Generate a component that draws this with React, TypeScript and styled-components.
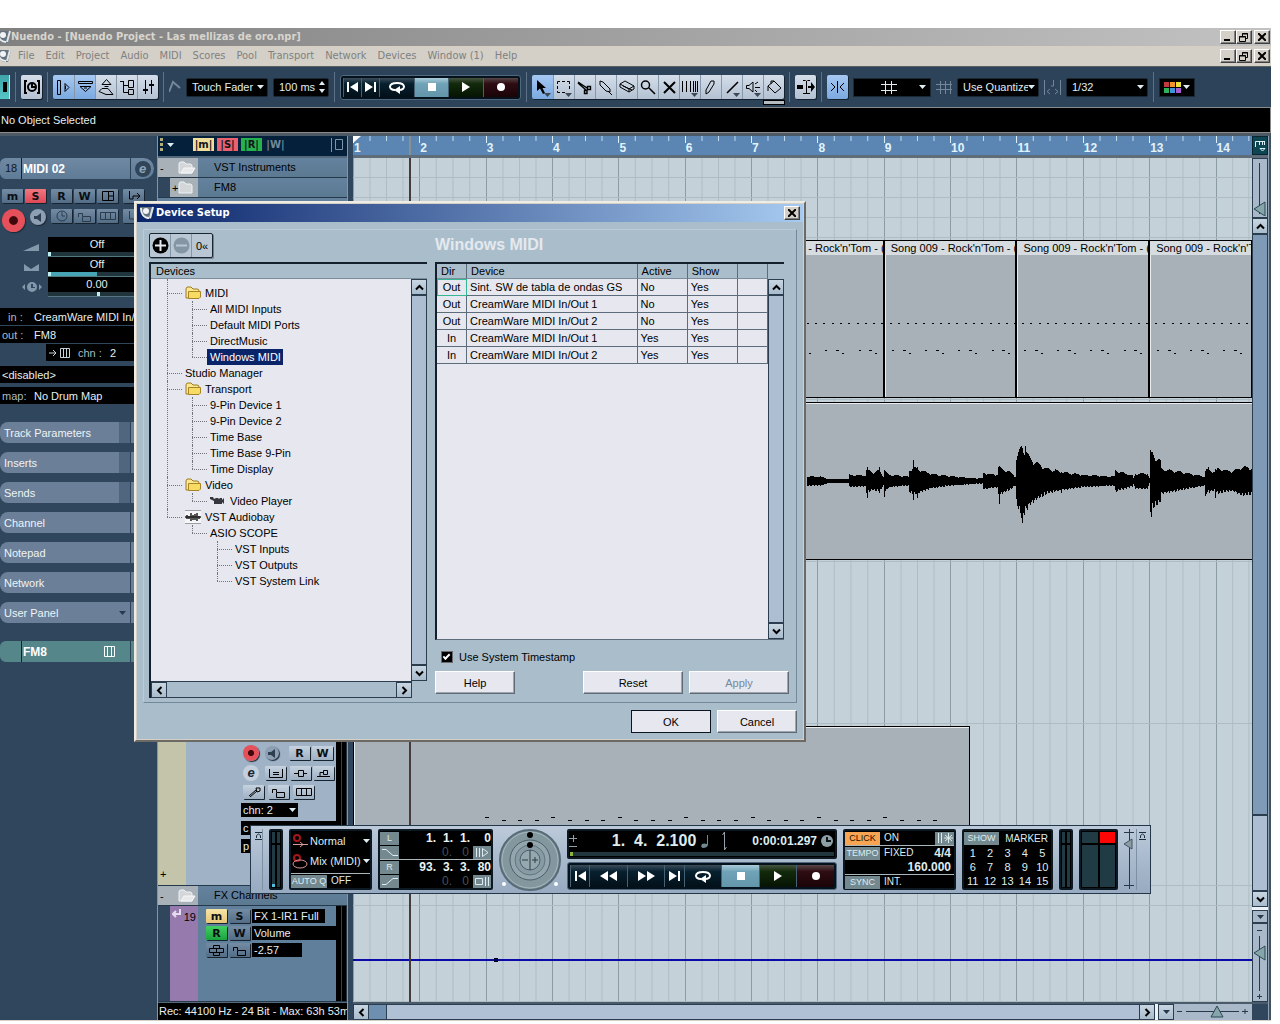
import React from "react";
import styled, { createGlobalStyle, css } from "styled-components";

const sans = '"Liberation Sans", Arial, sans-serif';
const tahoma = '"DejaVu Sans Condensed", "DejaVu Sans", Tahoma, sans-serif';
const BARS = 271;

const GlobalStyle = createGlobalStyle`
  *, *::before, *::after { box-sizing: border-box; }
  body { margin: 0; background: #fff; font: 11px/16px ${sans}; color: #000; overflow: hidden; }
  button, select, input { font: inherit; color: inherit; margin: 0; padding: 0; border: 0; border-radius: 0; }
  svg { display: block; flex: none; }
  ul { list-style: none; margin: 0; padding: 0; }
`;

/* ---------- glyphs ---------- */
type GlyphProps = { d: string; w?: number; h?: number; color?: string; fill?: string; sw?: number };
const Glyph = ({ d, w = 16, h = 16, color = "#000", fill = "none", sw = 1 }: GlyphProps) => (
  <svg width={w} height={h} viewBox={`0 0 ${w} ${h}`} fill={fill} stroke={color} strokeWidth={sw} aria-hidden="true">
    <path d={d} />
  </svg>
);
const Solid = ({ d, w = 16, h = 16, color = "#000" }: GlyphProps) => (
  <svg width={w} height={h} viewBox={`0 0 ${w} ${h}`} fill={color} aria-hidden="true">
    <path d={d} />
  </svg>
);
const Caret = ({ color = "#dfeef2" }: { color?: string }) => <Solid w={7} h={4} color={color} d="M0 0H7L3.5 4Z" />;

const Logo = () => (
  <svg width="14" height="14" viewBox="0 0 14 14" aria-hidden="true">
    <path d="M0 1H14L11 13H7C2 11 0 7 0 1Z" fill="#67727f" />
    <path d="M1 2C1 8 4 12 9 12" stroke="#e9edf2" strokeWidth="2" fill="none" />
    <circle cx="6" cy="5" r="3" fill="#f1f3f6" />
    <path d="M13 1L10 12" stroke="#dfe4e9" strokeWidth="2" fill="none" />
  </svg>
);
const Folder = ({ gold = false, open = false }: { gold?: boolean; open?: boolean }) => (
  <svg width={gold ? 16 : 18} height="14" viewBox={gold ? "0 0 16 14" : "0 0 18 14"} aria-hidden="true">
    <path
      d="M1 12V3Q1 1 3 1H6L8 3H12Q14 3 14 5V12Z"
      fill={gold ? "#fbe88e" : "#d3d7da"}
      stroke={gold ? "#9a7b22" : "#f1f3f4"}
    />
    {open ? <path d="M3 12L6 7H17L14 12Z" fill="#e7e9ea" stroke="#f6f7f8" /> : null}
    {gold ? <path d="M3.5 12.5V5.5H15.5V11L14 12.5Z" fill="#f7dc63" stroke="#a98426" /> : null}
  </svg>
);
const Clock = ({ color }: { color: string }) => (
  <svg width="12" height="12" viewBox="0 0 12 12" fill="none" stroke={color} aria-hidden="true">
    <circle cx="6" cy="6" r="5" />
    <path d="M6 2V6H9" />
  </svg>
);
const SolidClock = () => (
  <svg width="12" height="12" viewBox="0 0 12 12" fill="none" aria-hidden="true">
    <circle cx="6" cy="6" r="6" fill="#8fa0a6" />
    <path d="M6 2V6H10" stroke="#0b1418" strokeWidth="2" />
  </svg>
);
const P = {
  prev: "M0 0H2V10H0ZM11 0V10L3 5Z",
  next: "M0 0V10L8 5ZM9 0H11V10H9Z",
  play: "M0 0V10L8 5Z",
  rew: "M8 0V10L0 5ZM17 0V10L9 5Z",
  ffw: "M0 0V10L8 5ZM9 0V10L17 5Z",
  lock: "M1.500 6V2.500H5.500V5M5.500 5.500H13.500V10.500H5.500Z",
  keys: "M.5 1.500H15.500V8.500H.5ZM5.500 2V8M10.500 2V8",
};
const Cycle = () => (
  <svg width="18" height="13" viewBox="0 0 18 13" aria-hidden="true">
    <path d="M7 9C0 9 0 2 9 2S18 9 11 9" fill="none" stroke="#fff" strokeWidth="2" />
    <path d="M12 5V13L6 9Z" fill="#fff" />
  </svg>
);

/* ---------- frame ---------- */
const Page = styled.div`
  position: relative;
  min-height: 100vh;
  padding: 28px 9px 3px 0;
  display: flex;
  flex-direction: column;
`;
const Frame = styled.div`
  flex: 1;
  display: flex;
  flex-direction: column;
  border-bottom: 1px solid #d4d0c8;
`;
const TitleBar = styled.header`
  height: 18px;
  display: flex;
  align-items: center;
  background: linear-gradient(90deg, #808080, #c2c2c2);
  color: #d8d5ce;
  font: bold 11px/18px ${tahoma};
`;
const MenuBar = styled.nav`
  height: 20px;
  display: flex;
  align-items: center;
  background: #d4d0c8;
`;
const LogoSlot = styled.span`
  width: 11px;
  overflow: hidden;
  display: flex;
  justify-content: flex-end;
`;
const Menus = styled.div`
  display: flex;
  gap: 11px;
  padding-left: 7px;
  flex: 1;
`;
const MenuItem = styled.button`
  background: none;
  color: #808080;
  font: 11px/18px ${tahoma};
`;
const WinButtons = styled.div`
  display: flex;
  margin-left: auto;
  padding-right: 1px;
`;
const WinButton = styled.button`
  width: 16px;
  height: 14px;
  display: grid;
  place-items: center;
  background: #d4d0c8;
  border: 1px solid;
  border-color: #fff #404040 #404040 #fff;
  box-shadow: inset -1px -1px #808080;
  &:last-child:not(:first-child) { margin-left: 2px; }
`;
const WindowControls = () => (
  <WinButtons>
    <WinButton aria-label="Minimize"><Solid w={10} h={8} d="M1 6H7V8H1Z" /></WinButton>
    <WinButton aria-label="Restore"><Glyph w={10} h={9} d="M3.500 3V.5H8.500V5.500H6.500M.5 3.500H6.500V8.500H.5ZM3 1H9M0 4H7" /></WinButton>
    <WinButton aria-label="Close"><Glyph w={8} h={8} sw={2} d="M0 0L8 8M8 0L0 8" /></WinButton>
  </WinButtons>
);

/* ---------- toolbar ---------- */
const Toolbar = styled.div`
  height: 41px;
  display: flex;
  align-items: center;
  gap: 5px;
  background: #2d4359;
  border-top: 1px solid #5d6063;
`;
const Sep = styled.span`
  width: 1px;
  height: 30px;
  background: #5d7286;
`;
const TealTab = styled.button`
  width: 10px;
  height: 24px;
  background: linear-gradient(#3da3a9, #55c6c6);
  border-right: 1px solid #bfe4e6;
  display: grid;
  place-items: center;
`;
const ToolGroup = styled.div`
  display: flex;
  height: 24px;
  border-radius: 2px;
  overflow: hidden;
  box-shadow: 1px 1px #14222f;
`;
const ToolButton = styled.button<{ $on?: boolean }>`
  width: 21px;
  height: 24px;
  position: relative;
  display: grid;
  place-items: center;
  background: ${(p) => (p.$on ? "linear-gradient(#a6c8f2, #7ba9e0)" : "linear-gradient(#d5deea, #b3c1d2)")};
  &:not(:first-child) { border-left: 1px solid #8797aa; }
`;
const Corner = styled.span`
  position: absolute;
  right: 2px;
  bottom: 2px;
`;
const FillTool = styled.div`
  position: relative;
  display: flex;
`;
const FillSwatch = styled.span`
  position: absolute;
  right: -1px;
  top: 25px;
  width: 22px;
  height: 5px;
  background: #b4bcc2;
  border: 1px solid #000;
`;
const Well = styled.label<{ $w: number }>`
  width: ${(p) => p.$w}px;
  height: 19px;
  padding: 0 3px 0 5px;
  display: flex;
  align-items: center;
  background: #000;
  border: 1px solid #1a2836;
  border-radius: 2px;
  color: #e2eef2;
`;
const Select = styled.select`
  appearance: none;
  flex: 1;
  min-width: 0;
  background: transparent;
  outline: 0;
`;
const IconDrop = styled.button<{ $w: number }>`
  width: ${(p) => p.$w}px;
  height: 19px;
  padding: 0 4px;
  display: flex;
  align-items: center;
  justify-content: space-between;
  background: #000;
  border: 1px solid #1a2836;
`;
const Spread = styled.span`
  flex: 1;
  display: flex;
  justify-content: center;
`;
const Transport = styled.div<{ $grow?: boolean }>`
  display: flex;
  width: ${(p) => (p.$grow ? "auto" : "181px")};
  padding: 2px;
  height: ${(p) => (p.$grow ? 29 : 25)}px;
  background: #06121b;
  border: 1px solid #50687d;
  border-radius: 3px;
`;
type Tone = "navy" | "stop" | "play" | "rec";
const tones: Record<Tone, string> = {
  navy: "linear-gradient(#3b4c5a, #07202f 30%, #031019)",
  stop: "linear-gradient(#a9ccda, #71a3b8 30%, #6396ab)",
  play: "linear-gradient(#46543f, #122a0b 30%, #061303)",
  rec: "linear-gradient(#574548, #2e0c12 30%, #190408)",
};
const TButton = styled.button<{ $tone?: Tone; $small?: boolean }>`
  flex: ${(p) => (p.$small ? 1 : 2)};
  display: grid;
  place-items: center;
  background: ${(p) => tones[p.$tone || "navy"]};
  border-left: 1px solid #456172;
`;
const Swatches = styled.span`
  display: grid;
  grid-template-columns: repeat(3, 5px);
  gap: 1px;
`;
const Swatch = styled.i<{ $c: string }>`
  height: 5px;
  background: ${(p) => p.$c};
`;
const InfoLine = styled.div`
  height: 26px;
  padding: 0 1px;
  background: #000;
  border: solid #8a8a8a;
  border-width: 1px 1px 1px 0;
  color: #e6eef0;
  line-height: 24px;
`;

const views = [
  "M3.500 3.500H6.500V17.500H3.500ZM11 6.500L15 10.500L11 14.500ZM11.500 9V12",
  "M3.500 4.500H17.500V6.500H3.500ZM5 9.500H16L10.500 14.500ZM9 11H12",
  "M10.500 2.500L15 7.500H6ZM8.500 9.500H12.500M6 11.500L3 14.500L10 17.500L17 17.500L12 11.500Z",
  "M3 4.500H7M6.500 4V15.500H11M7 8.500H11M11.500 3.500H16.500V10.500H11.500ZM11.500 12.500H16.500V17.500H11.500Z",
  "M7.500 3V17M13.500 3V17M5 13.500H10M5 12.500H10M11 7.500H16M11 8.500H16",
];
const tools: { name: string; d: string; menu?: boolean; sw?: number; solid?: boolean }[] = [
  { name: "Object selection", d: "M4 3V14L7 11.500L10 17L12 16L9.500 11H13Z", menu: true, solid: true },
  { name: "Range selection", d: "M3.500 4.500H6M8 4.500H11M13 4.500H15.500V7M15.500 9V12M3.500 4.500V7M3.500 9V12M3.500 14V15.500H6M8 15.500H11", menu: true },
  { name: "Split", d: "M3 5L12 11M3 6L11 13M12.500 9.500H15.500V12.500H12.500ZM9.500 13.500H12V16.500H9.500Z", sw: 1.4 },
  { name: "Glue", d: "M4 4L7 5L14 12V15L10 14L4 8ZM12 14L16 18" },
  { name: "Erase", d: "M3 7L8 4L17 9L12 12ZM3 7V10L12 15V12M12 15L17 12V9M6 9L15 13" },
  { name: "Zoom", d: "M3.500 8A4 4 0 1 0 11.500 8A4 4 0 1 0 3.500 8M11 11L17 17", sw: 1.5 },
  { name: "Mute", d: "M5 5L16 16M16 5L5 16", sw: 2 },
  { name: "Time warp", d: "M2.500 4V15M6.500 4V15M10.500 4V15M13.500 4V15M15.500 4V15M17.500 4V15", menu: true },
  { name: "Draw", d: "M10 4L13 4L13 7L8 15L5 17L5 13Z" },
  { name: "Line", d: "M5 16L16 5", menu: true, sw: 1.6 },
  { name: "Play", d: "M3.500 8.500H6L10 5V15L6 11.500H3.500ZM12 7L15 5M12 10.500H17M12 13L14 15", menu: true },
  { name: "Color", d: "M4 9L10 4L17 11L11 16ZM4 9V14M7 7V4L10 4" },
];
const gridD = "M4.500 0V13M9.500 0V13M14.500 0V13M0 3.500H16M0 8.500H16";

const MainToolbar = () => (
  <Toolbar>
    <TealTab aria-label="Activate project"><Solid w={4} h={10} d="M0 0H4V10H0Z" /></TealTab>
    <Sep />
    <ToolGroup>
      <ToolButton aria-label="Delay compensation">
        <svg width="18" height="16" viewBox="0 0 18 16" fill="none" stroke="#000" strokeWidth="2" aria-hidden="true">
          <path d="M4 2H2V14H4M14 2H16V14H14M9 4V8H13" /><circle cx="9" cy="8" r="4" />
        </svg>
      </ToolButton>
    </ToolGroup>
    <Sep />
    <ToolGroup>
      {views.map((d, i) => (
        <ToolButton key={d} $on={i < 2} aria-label={"View " + (i + 1)}><Glyph w={20} h={20} d={d} /></ToolButton>
      ))}
    </ToolGroup>
    <Sep />
    <Glyph w={12} h={14} color="#74879a" sw={2} d="M0 12L4 2L11 8" />
    <Well $w={82}>
      <Select aria-label="Automation mode"><option>Touch Fader</option></Select><Caret />
    </Well>
    <Well $w={56}>
      <Select aria-label="Return time"><option>100 ms</option></Select>
      <Solid w={6} h={12} color="#dfeef2" d="M0 4H6L3 0ZM0 8H6L3 12Z" />
    </Well>
    <Sep />
    <Transport>
      <TButton $small aria-label="Previous"><Solid w={11} h={10} color="#fff" d={P.prev} /></TButton>
      <TButton $small aria-label="Next"><Solid w={11} h={10} color="#fff" d={P.next} /></TButton>
      <TButton aria-label="Cycle"><Cycle /></TButton>
      <TButton $tone="stop" aria-label="Stop"><Solid w={8} h={8} color="#fff" d="M0 0H8V8H0Z" /></TButton>
      <TButton $tone="play" aria-label="Play"><Solid w={8} h={10} color="#fff" d={P.play} /></TButton>
      <TButton $tone="rec" aria-label="Record"><Solid w={8} h={8} color="#fff" d="M0 4A4 4 0 1 1 8 4A4 4 0 1 1 0 4" /></TButton>
    </Transport>
    <Sep />
    <FillTool>
      <ToolGroup>
        {tools.map((t, i) => (
          <ToolButton key={t.name} $on={i === 0} aria-label={t.name}>
            {t.solid ? <Solid w={20} h={20} d={t.d} /> : <Glyph w={20} h={20} d={t.d} sw={t.sw} />}
            {t.menu ? <Corner><Caret color="#3c4854" /></Corner> : null}
          </ToolButton>
        ))}
      </ToolGroup>
      <FillSwatch />
    </FillTool>
    <Sep />
    <ToolGroup>
      <ToolButton aria-label="Autoscroll"><Solid w={20} h={18} d="M1 7H7V11H1ZM10 3H11V15H10ZM7 2H9L10.500 3L12 2H14V3H11V15H14V16H7V15H10V3H7ZM12 8H15V4L19 9L15 14V10H12Z" /></ToolButton>
    </ToolGroup>
    <Sep />
    <ToolGroup>
      <ToolButton $on aria-label="Snap"><Glyph w={15} h={14} d="M7.500 1V13M1 3L5 7L1 11M14 3L10 7L14 11" /></ToolButton>
    </ToolGroup>
    <IconDrop $w={78} aria-label="Snap mode">
      <Spread><Glyph w={16} h={13} color="#e2eef2" d="M4.500 0V13M10.500 0V13M0 3.500H16M0 9.500H16" /></Spread><Caret />
    </IconDrop>
    <Glyph w={16} h={13} color="#74879a" d={gridD} />
    <Well $w={82}>
      <Select aria-label="Grid type"><option>Use Quantize</option></Select><Caret />
    </Well>
    <Glyph w={17} h={16} color="#74879a" d="M.5 1V16M16.500 1V16M9.500 1V7H7M6 10L3 12.500L6 15M11 10L14 12.500L11 15" />
    <Well $w={82}>
      <Select aria-label="Quantize"><option>1/32</option></Select><Caret />
    </Well>
    <Sep />
    <IconDrop $w={36} aria-label="Colors">
      <Swatches>
        {["#c23a3a", "#f0932a", "#e9e03c", "#2fb257", "#3f93dd", "#a85bd0"].map((c) => <Swatch key={c} $c={c} />)}
      </Swatches>
      <Caret />
    </IconDrop>
  </Toolbar>
);

/* ---------- inspector ---------- */
const Main = styled.main`
  flex: 1;
  display: flex;
  background: #2f465c;
  border-top: 3px solid #4d5a66;
  border-right: 2px solid #43505e;
`;
const Inspector = styled.aside`
  width: 157px;
  padding-top: 22px;
  display: flex;
  flex-direction: column;
`;
const NameBar = styled.div<{ $teal?: boolean }>`
  height: 21px;
  width: 154px;
  display: flex;
  align-items: center;
  border-radius: 6px 11px 11px 6px;
  background: ${(p) => (p.$teal ? "#55868a" : "linear-gradient(#7089a3, #5f7b96)")};
  color: #fff;
  font-weight: bold;
`;
const NameNumber = styled.span`
  width: 22px;
  height: 21px;
  padding-left: 5px;
  border-right: 1px solid #14212e;
  font-weight: normal;
  color: #101820;
  line-height: 21px;
`;
const NameText = styled.span`
  flex: 1;
  padding-left: 1px;
  font-size: 12px;
`;
const NameEnd = styled.span`
  width: 24px;
  height: 21px;
  display: grid;
  place-items: center;
  border-left: 1px solid #2b4157;
`;
const Edit = styled.button<{ $light?: boolean }>`
  width: 16px;
  height: 16px;
  border-radius: 50%;
  background: ${(p) => (p.$light ? "#c3cfdc" : "#304558")};
  color: ${(p) => (p.$light ? "#182430" : "#8fa5ba")};
  font: italic bold 13px/14px ${sans};
`;
const Controls = styled.div<{ $top?: boolean }>`
  height: 26px;
  margin-top: ${(p) => (p.$top ? 4 : 0)}px;
  display: flex;
  align-items: ${(p) => (p.$top ? "center" : "flex-start")};
  padding-left: 2px;
  gap: 2px;
`;
const keyColors: Record<string, string> = {
  slate: "linear-gradient(#748ca3, #536d87)",
  red: "linear-gradient(#f07880, #de4857)",
  light: "linear-gradient(#c6d2df, #9eb0c3)",
  yellow: "linear-gradient(#f6e4a6, #e6c578)",
  green: "linear-gradient(#42cf62, #19a33e)",
};
const Key = styled.button<{ $c?: string }>`
  width: 21px;
  height: 14px;
  display: grid;
  place-items: center;
  background: ${(p) => keyColors[p.$c || "slate"]};
  border-radius: 1px;
  box-shadow: 1px 1px #17242f;
  color: #0a0f14;
  font: bold 11px/13px "DejaVu Sans", sans-serif;
`;
const Gap = styled.span<{ $w: number }>`
  width: ${(p) => p.$w}px;
`;
const Round = styled.button<{ $size: number; $red?: boolean }>`
  width: ${(p) => p.$size}px;
  height: ${(p) => p.$size}px;
  border-radius: 50%;
  display: grid;
  place-items: center;
  background: ${(p) => (p.$red ? "radial-gradient(circle, #40090c 0 24%, #e5505a 30%)" : "#8d9fb2")};
  box-shadow: 1px 1px 1px #1c2a38;
`;
const Speaker = () => <Solid w={9} h={9} color="#2c3e50" d="M0 3H3L7 0V9L3 6H0Z" />;
const Params = styled.div`
  padding: 2px 11px 11px 0;
`;
const Param = styled.div`
  height: 20px;
  display: grid;
  grid-template-columns: 48px 1fr;
  align-items: center;
`;
const ParamIcon = styled.span`
  padding-left: 22px;
`;
const ParamValue = styled.div`
  height: 20px;
  background: #000;
  border-bottom: 1px solid #54777f;
  color: #e6eef0;
  line-height: 15px;
  text-align: center;
`;
const ParamBar = styled.div<{ $at: number; $fill?: boolean }>`
  height: 4px;
  background: #20343b;
  &::before {
    content: "";
    display: block;
    width: ${(p) => (p.$fill ? p.$at : 3)}px;
    height: 4px;
    margin-left: ${(p) => (p.$fill ? 0 : p.$at)}px;
    background: ${(p) => (p.$fill ? "#46a4b4" : "#bdeef2")};
    border-left: 3px solid #bdeef2;
  }
`;
const Route = styled.div<{ $indent?: number; $gap?: number }>`
  height: 17px;
  margin: 0 4px ${(p) => p.$gap || 1}px ${(p) => p.$indent || 0}px;
  padding-left: 2px;
  display: flex;
  align-items: center;
  background: #000;
  color: #e6eef0;
  white-space: nowrap;
  overflow: hidden;
`;
const RouteLabel = styled.span`
  width: 32px;
  flex: none;
  color: #a9bcc4;
`;
const Sections = styled.div`
  padding-top: 17px;
  display: flex;
  flex-direction: column;
  gap: 9px;
`;
const Section = styled.button<{ $split?: boolean }>`
  height: 21px;
  width: 154px;
  padding: 0 28px 0 4px;
  display: flex;
  align-items: center;
  justify-content: space-between;
  border-radius: 8px 0 0 8px;
  color: #eef3f6;
  background: linear-gradient(90deg, #6b8098 119px, ${(p) => (p.$split ? "#50667e" : "#6b8098")} 119px 130px, #2b4157 130px 131px, #6b8098 131px);
`;

const InspectorPanel = () => (
  <Inspector>
    <NameBar>
      <NameNumber>18</NameNumber>
      <NameText>MIDI 02</NameText>
      <NameEnd><Edit aria-label="Edit channel">e</Edit></NameEnd>
    </NameBar>
    <Controls $top>
      <Key>m</Key><Key $c="red">S</Key><Gap $w={1} /><Key>R</Key><Key>W</Key>
      <Key aria-label="Panel"><Glyph w={12} h={10} d="M.5 .5H11.500V9.500H.5ZM6.500 .5V9.500M7 5H11" /></Key><Gap $w={1} />
      <Key aria-label="Input"><Glyph w={14} h={10} d="M2.500 0V8H6V5H12M10 2L13 5L10 8" /></Key>
    </Controls>
    <Controls>
      <Round $size={23} $red aria-label="Record enable" /><Gap $w={1} />
      <Round $size={16} aria-label="Monitor"><Speaker /></Round><Gap $w={1} />
      <Key aria-label="Timebase"><Clock color="#2a3b4c" /></Key>
      <Key aria-label="Lock"><Glyph w={15} h={11} color="#2a3b4c" d={P.lock} /></Key>
      <Key aria-label="Lanes"><Glyph w={16} h={10} color="#2a3b4c" d={P.keys} /></Key><Gap $w={1} />
      <Key aria-label="Output"><Glyph w={12} h={10} color="#2a3b4c" d="M1.500 0V8H11" /></Key>
    </Controls>
    <Params>
      <Param>
        <ParamIcon><Solid w={18} h={9} color="#8298ab" d="M1 8L17 1V8Z" /></ParamIcon>
        <ParamValue>Off<ParamBar $at={0} /></ParamValue>
      </Param>
      <Param>
        <ParamIcon><Solid w={18} h={9} color="#8298ab" d="M2 1L9 6L17 1V8H2Z" /></ParamIcon>
        <ParamValue>Off<ParamBar $at={49} $fill /></ParamValue>
      </Param>
      <Param>
        <ParamIcon><Solid w={20} h={10} color="#8298ab" d="M0 5L3 2V8ZM20 5L17 2V8ZM10 0A5 5 0 1 0 10 10A5 5 0 1 0 10 0M9 2H11V5H13V6H9Z" /></ParamIcon>
        <ParamValue>0.00<ParamBar $at={49} /></ParamValue>
      </Param>
    </Params>
    <Route><RouteLabel>&nbsp; in :</RouteLabel>CreamWare MIDI In/O</Route>
    <Route><RouteLabel>out :</RouteLabel>FM8</Route>
    <Route $indent={46} $gap={5}>
      <Glyph w={24} h={12} color="#c5d3d8" d="M1 6H8M5 3L8 6L5 9M12.500 1.500H21.500V10.500H12.500ZM15.500 1V10M18.500 1V10" />
      <Gap $w={6} /><RouteLabel>chn :</RouteLabel>2
    </Route>
    <Route $gap={4}>&lt;disabled&gt;</Route>
    <Route><RouteLabel>map:</RouteLabel>No Drum Map</Route>
    <Sections>
      {["Track Parameters", "Inserts", "Sends", "Channel", "Notepad", "Network", "User Panel"].map((s, i) => (
        <Section key={s} $split={i < 3}>{s}{s === "User Panel" ? <Caret color="#263a4e" /> : null}</Section>
      ))}
      <Gap $w={1} />
      <NameBar $teal>
        <NameNumber />
        <NameText>FM8</NameText>
        <Glyph w={11} h={11} color="#fff" d="M.5 .5H10.500V10.500H.5ZM3.500 0V10M7.500 0V10" />
        <Gap $w={15} /><NameEnd />
      </NameBar>
    </Sections>
  </Inspector>
);

/* ---------- track list ---------- */
const TrackColumn = styled.section`
  width: 191px;
  display: flex;
  flex-direction: column;
  border-left: 1px solid #8496a6;
  border-right: 1px solid #8496a6;
`;
const TrackHeader = styled.div`
  height: 22px;
  padding: 0 3px 3px 2px;
  display: flex;
  align-items: center;
  gap: 3px;
  background: #04203a;
  border-bottom: 2px solid #54687b;
`;
const Flag = styled.button<{ $c: string }>`
  width: 21px;
  height: 13px;
  background: ${(p) => p.$c};
  color: #10151a;
  font: bold 10px/12px "DejaVu Sans", sans-serif;
  &:disabled { color: #73879a; }
`;
const laneHeight = css<{ $h: number }>`
  ${(p) => (p.$h ? `height: ${p.$h}px; flex: none;` : "flex: 1;")}
`;
const Track = styled.div<{ $h: number }>`
  ${laneHeight}
  display: flex;
  background: linear-gradient(#64829e, #5c7992);
  border-bottom: 1px solid #26394b;
`;
const TrackTab = styled.div<{ $indent?: number }>`
  width: ${(p) => 40 - (p.$indent || 0)}px;
  margin-left: ${(p) => p.$indent || 0}px;
  padding: 0 2px;
  display: flex;
  justify-content: space-between;
  align-items: center;
  background: #a9b1b8;
  box-shadow: ${(p) => -(p.$indent || 0)}px 0 #2f465c;
  line-height: 26px;
`;
const TrackTitle = styled.span`
  padding-left: 16px;
  line-height: 19px;
`;
const Stripe = styled.div<{ $c: string; $indent?: number }>`
  width: 29px;
  padding: 3px 2px;
  display: flex;
  justify-content: space-between;
  align-items: ${(p) => (p.$indent ? "flex-start" : "flex-end")};
  background: ${(p) => p.$c};
  box-shadow: ${(p) => -(p.$indent || 0)}px 0 #2f465c;
  margin-left: ${(p) => p.$indent || 0}px;
`;
const TrackBody = styled.div<{ $c: string; $pad: string; $gap: number }>`
  flex: 1;
  padding: ${(p) => p.$pad};
  background: ${(p) => p.$c};
  display: flex;
  flex-direction: column;
  gap: ${(p) => p.$gap}px;
`;
const TrackRow = styled.div<{ $gap?: number }>`
  display: flex;
  align-items: center;
  padding-left: 2px;
  gap: ${(p) => p.$gap || 2}px;
`;
const Meter = styled.div`
  width: 11px;
  flex: none;
  background: #000;
  border-right: 1px solid #25313c;
  box-shadow: inset -4px 0 #000, inset -5px 0 #33424f;
`;
const ValueBox = styled.div<{ $w: number }>`
  width: ${(p) => p.$w}px;
  height: 14px;
  padding: 0 2px;
  display: flex;
  align-items: center;
  justify-content: space-between;
  background: #000;
  color: #e6eef0;
  white-space: nowrap;
`;
const Status = styled.footer`
  height: 18px;
  padding-left: 1px;
  background: #000;
  color: #e6eef0;
  border-top: 1px solid #55697c;
  white-space: nowrap;
  overflow: hidden;
`;

const TrackList = () => (
  <TrackColumn>
    <TrackHeader>
      <Solid w={4} h={14} color="#b5ad79" d="M0 0H3V3H0ZM0 5H3V8H0ZM0 10H3V13H0Z" />
      <Caret />
      <Gap $w={13} />
      <Flag $c="#f0df9a">|m|</Flag><Flag $c="#ea6170">|S|</Flag><Flag $c="#27b14e">|R|</Flag>
      <Flag $c="transparent" disabled>|W|</Flag>
      <Gap $w={39} />
      <Glyph w={12} h={14} color="#7f93a6" d="M.5 0V14M4.500 1.500H11.500V11.500H4.500Z" />
    </TrackHeader>
    <Track $h={20}><TrackTab>-<Folder open /></TrackTab><TrackTitle>VST Instruments</TrackTitle></Track>
    <Track $h={20}><TrackTab $indent={12}>+<Folder /></TrackTab><TrackTitle>FM8</TrackTitle></Track>
    <Track $h={20} /><Track $h={20} /><Track $h={162} /><Track $h={162} /><Track $h={162} />
    <Track $h={162}>
      <Stripe $c="#c3c4a9">+</Stripe>
      <TrackBody $c="#a0b3c6" $pad="21px 0 0 55px" $gap={4}>
        <TrackRow>
          <Round $size={16} $red aria-label="Record enable" /><Gap $w={2} />
          <Round $size={14} aria-label="Monitor"><Speaker /></Round><Gap $w={6} />
          <Key $c="light">R</Key><Key $c="light">W</Key>
        </TrackRow>
        <TrackRow>
          <Edit $light aria-label="Edit channel">e</Edit><Gap $w={2} />
          <Key $c="light" aria-label="Edit in place"><Glyph w={14} h={9} d="M.5 0V8.500H13.500V0M4 3.500H10M4 5.500H10" /></Key><Gap $w={0} />
          <Key $c="light" aria-label="Inserts"><Glyph w={14} h={9} d="M0 4.500H4M9 4.500H13M4.500 1.500H9.500V7.500H4.500Z" /></Key>
          <Key $c="light" aria-label="Sends"><Glyph w={14} h={9} d="M0 7.500H13M3 7V3.500H6M6.500 1.500H10.500V5.500H6.500Z" /></Key>
        </TrackRow>
        <TrackRow $gap={4}>
          <Key $c="light" aria-label="Drum map"><Glyph w={14} h={10} d="M2 9L9 3M3 10L10 4M9 1H13V4L10 5Z" /></Key>
          <Key $c="light" aria-label="Lock"><Glyph w={15} h={11} d={P.lock} /></Key>
          <Key $c="light" aria-label="Lanes"><Glyph w={16} h={10} d={P.keys} /></Key>
        </TrackRow>
        <ValueBox $w={57}><span>chn: 2</span><Caret /></ValueBox>
        <ValueBox $w={95}>c</ValueBox>
        <ValueBox $w={95}>p</ValueBox>
      </TrackBody>
      <Meter />
    </Track>
    <Track $h={20}><TrackTab>-<Folder open /></TrackTab><TrackTitle>FX Channels</TrackTitle></Track>
    <Track $h={0}>
      <Stripe $c="#9679ad" $indent={12}>
        <Glyph w={9} h={9} color="#e5dcee" sw={2} d="M8 0V5H2M4 2L1 5L4 8" />19
      </Stripe>
      <TrackBody $c="#607f9a" $pad="3px 0 0 6px" $gap={3}>
        <TrackRow>
          <Key $c="yellow">m</Key><Key>S</Key><ValueBox $w={73}>FX 1-IR1 Full</ValueBox>
        </TrackRow>
        <TrackRow><Key $c="green">R</Key><Key>W</Key><ValueBox $w={84}>Volume</ValueBox></TrackRow>
        <TrackRow>
          <Key aria-label="Bypass"><Glyph w={15} h={11} d="M4.500 .5H10.500V3.500H4.500ZM.5 3.500H7.500V7.500H.5ZM7.500 3.500H14.500V7.500H7.500ZM4.500 7.500H10.500V10.500H4.500Z" /></Key>
          <Key aria-label="Lock"><Glyph w={15} h={11} d={P.lock} /></Key>
          <ValueBox $w={50}>-2.57</ValueBox>
        </TrackRow>
      </TrackBody>
      <Meter />
    </Track>
    <Status>Rec: 44100 Hz - 24 Bit - Max: 63h 53mi</Status>
  </TrackColumn>
);

/* ---------- arrange ---------- */
const Arrange = styled.section`
  flex: 1;
  min-width: 0;
  margin-left: 5px;
  display: flex;
  flex-direction: column;
  border-right: 1px solid #8fa0b0;
`;
const barGrid = css`
  display: grid;
  grid-template-columns: repeat(13, 20fr) 11fr;
`;
const RulerRow = styled.div`
  height: 22px;
  display: flex;
  border-bottom: 3px solid #5e6d79;
`;
const Ruler = styled.div`
  ${barGrid}
  flex: 1;
  position: relative;
  background: #5b86b4;
`;
const RulerBar = styled.div<{ $last?: boolean }>`
  padding: 4px 0 0 1px;
  overflow: hidden;
  color: #e2f4fa;
  font: bold 12px/16px ${sans};
  background-image: linear-gradient(#d8eef8, #d8eef8), linear-gradient(90deg, #c3dded 1px, transparent 1px);
  background-size: 1px 7px, ${(p) => (p.$last ? "45%" : "25%")} 5px;
  background-repeat: no-repeat, repeat-x;
`;
const RulerFlag = styled.span`
  position: absolute;
  left: 0;
  top: 0;
`;
const RulerMenu = styled.button`
  width: 16px;
  display: grid;
  place-items: center;
  background: #0d4652;
  border: 1px solid #0a2530;
`;
const Body = styled.div`
  flex: 1;
  display: flex;
`;
const Canvas = styled.div`
  flex: 1;
  min-width: 0;
  position: relative;
  display: flex;
  flex-direction: column;
  background: #c4d1d8;
`;
const Lines = styled.div`
  ${barGrid}
  position: absolute;
  inset: 0;
`;
const BarLines = styled.div<{ $last?: boolean }>`
  background-image: linear-gradient(90deg, #8b9ca2 1px, transparent 1px), linear-gradient(90deg, #aebdc3 1px, transparent 1px);
  background-size: 100% 100%, ${(p) => (p.$last ? "45%" : "25%")} 100%;
`;
const Cursor = styled.div<{ $c?: string }>`
  position: absolute;
  left: 56px;
  top: 0;
  bottom: 0;
  width: 2px;
  background: ${(p) => p.$c || "#453a3c"};
`;
const Lane = styled.div<{ $h: number }>`
  ${laneHeight}
  position: relative;
  display: flex;
  padding: 2px 0;
  border-bottom: 1px solid #aebcc3;
`;
const LaneStart = styled.div<{ $units: number }>`
  width: calc(100% * ${(p) => p.$units} / ${BARS});
  flex: none;
`;
const Clip = styled.div<{ $units: number }>`
  width: calc(100% * ${(p) => p.$units} / ${BARS});
  flex: none;
  height: 158px;
  overflow: hidden;
  background: #a7b1b7;
  border: 1px solid #000;
  box-shadow: inset 1px 1px #e8eef0;
`;
const ClipTitle = styled.div`
  height: 14px;
  padding-left: 6px;
  background: #d6dcdf;
  line-height: 15px;
  white-space: nowrap;
  overflow: hidden;
`;
const AudioClip = styled(Clip)`
  display: flex;
  justify-content: flex-end;
  border-width: 1px 0;
`;
const Automation = styled.div`
  height: 2px;
  width: 100%;
  margin-top: 51px;
  background: #0a0aa8;
`;
const Point = styled.span`
  position: absolute;
  left: 141px;
  top: 52px;
  width: 4px;
  height: 4px;
  background: #000030;
`;
const envelope: [number, number][] = [
  [0, 4], [13, 4], [20, 1.5], [41, 1], [42, 6], [58, 5], [59, 12], [65, 9], [72, 11], [76, 4], [77, 11], [82, 6], [101, 4], [102, 11],
  [106, 15], [112, 12], [124, 7], [145, 4], [170, 2], [175, 2], [176, 8], [190, 6], [191, 15], [196, 12], [203, 9], [208, 4], [209, 24],
  [214, 39], [218, 34], [222, 26], [230, 19], [240, 13], [255, 9], [275, 6], [307, 4], [308, 11], [325, 5], [326, 2], [328, 7],
  [340, 8], [342, 2], [343, 33], [347, 28], [353, 22], [354, 13], [375, 9], [397, 4], [398, 13], [408, 9], [410, 13], [425, 10], [434, 15], [445, 14],
];
const spikes: Record<number, [number, number]> = {
  60: [13, 16], 72: [13, 11], 77: [10, 15], 106: [20, 18], 110: [13, 16], 192: [14, 22], 215: [32, 41], 218: [34, 24], 248: [11, 9], 254: [8, 11], 344: [28, 35], 398: [9, 14], 401: [13, 8], 408: [11, 16],
};
const waveD = (() => {
  let d = "";
  let k = 0;
  for (let x = 0; x < 445; x++) {
    while (k < envelope.length - 2 && envelope[k + 1][0] <= x) k++;
    const [x0, a0] = envelope[k];
    const [x1, a1] = envelope[k + 1];
    const a = a0 + ((a1 - a0) * (x - x0)) / (x1 - x0);
    const s = spikes[x];
    const up = s ? s[0] : Math.round(a * (0.68 + 0.25 * Math.abs(Math.sin(x * 12.9))));
    const down = s ? s[1] : Math.round(a * (0.68 + 0.25 * Math.abs(Math.sin(x * 7.3 + 1))));
    d += `M${x} ${77 - up}h1V${79 + down}h-1Z`;
  }
  return d;
})();
const dashes = (from: number, to: number, step: number, y: (i: number) => number, w: number) => {
  let d = "";
  for (let x = from, i = 0; x < to; x += step, i++) d += `M${Math.round(x)} ${y(i)}h${w}v1h-${w}Z`;
  return d;
};
const clipNotes =
  dashes(5, 130, 8.3, () => 68, 2) + dashes(7, 130, 16.6, (i) => (i % 2 ? 98 : 95), 2) + dashes(18, 130, 33, () => 95, 3);
const longNotes = dashes(131, 590, 16.6, (i) => (i % 4 ? 93 : 90), 4);

/* ---------- scroll parts ---------- */
const ScrollButton = styled.button`
  width: 16px;
  height: 16px;
  flex: none;
  display: grid;
  place-items: center;
  background: linear-gradient(#c9d6e2, #a9bccd);
  border: 1px solid #2a3e50;
`;
const Arrow = ({ dir }: { dir: "up" | "down" | "left" | "right" }) => (
  <Glyph w={9} h={9} sw={2} d={{ up: "M1 6.500L4.500 3L8 6.500", down: "M1 2.500L4.500 6L8 2.500", left: "M6.500 1L3 4.500L6.500 8", right: "M2.500 1L6 4.500L2.500 8" }[dir]} />
);
const VBar = styled.div`
  width: 16px;
  flex: none;
  display: flex;
  flex-direction: column;
`;
const Trough = styled.div<{ $c?: string; $h?: number }>`
  flex: ${(p) => (p.$h ? "none" : 1)};
  height: ${(p) => (p.$h ? p.$h + "px" : "auto")};
  background: ${(p) => p.$c || "#adbed2"};
  border: 1px solid #2a3e50;
`;
const ZoomBox = styled.div<{ $h: number }>`
  height: ${(p) => p.$h}px;
  display: grid;
  place-items: center;
  background: #a9b9c9;
  border: 1px solid #2a3e50;
`;
const Divider = styled.div`
  flex: none;
  min-width: 3px;
  min-height: 3px;
  background: #eef2f6;
`;
const BottomRow = styled.div`
  height: 18px;
  display: flex;
  border-top: 2px solid #4a5c6c;
`;
const HTrough = styled.div`
  flex: 1;
  background: #b0c1d5;
  border: solid #2a3e50;
  border-width: 1px 0;
  display: flex;
`;
const HThumb = styled.div`
  width: 18px;
  background: #6f8fb0;
  border-right: 1px solid #2a3e50;
`;
const HZoom = styled.div`
  width: 78px;
  display: grid;
  place-items: center;
  background: #a9b9c9;
`;
const bars = Array.from({ length: 14 }, (_, i) => i + 1);

const ArrangeArea = () => (
  <Arrange>
    <RulerRow>
      <Ruler>
        {bars.map((n) => <RulerBar key={n} $last={n === 14}>{n}</RulerBar>)}
        <RulerFlag><Solid w={8} h={7} color="#fff" d="M0 0H8L0 7Z" /></RulerFlag>
        <Cursor $c="#8a8f90" />
      </Ruler>
      <RulerMenu aria-label="Ruler format"><Glyph w={12} h={14} color="#dff0f4" d="M1.500 8V2.500H11M5.500 2V6M8.500 2V6M10.500 2V6M6 9.500H11L8.500 12Z" /></RulerMenu>
    </RulerRow>
    <Body>
      <Canvas>
        <Lines>{bars.map((n) => <BarLines key={n} $last={n === 14} />)}</Lines>
        <Lane $h={20} /><Lane $h={20} /><Lane $h={20} /><Lane $h={20} />
        <Lane $h={162}>
          <LaneStart $units={120} />
          {[40, 40, 40, 31].map((u, i) => (
            <Clip key={i} $units={u}>
              <ClipTitle>{u === 40 ? "Song 009 - Rock'n'Tom - (" : "Song 009 - Rock'n'T"}</ClipTitle>
              <Solid w={132} h={130} d={clipNotes} />
            </Clip>
          ))}
        </Lane>
        <Lane $h={162}><AudioClip $units={271}><Solid w={445} h={156} d={waveD} /></AudioClip></Lane>
        <Lane $h={162} />
        <Lane $h={162}><Clip $units={186}><Solid w={600} h={150} d={longNotes} /></Clip></Lane>
        <Lane $h={20} />
        <Lane $h={0}><Automation /><Point /></Lane>
        <Cursor />
      </Canvas>
      <VBar>
        <ZoomBox $h={60}>
          <svg width="14" height="56" viewBox="0 0 14 56" aria-hidden="true">
            <path d="M6.500 3V54" stroke="#26384a" /><path d="M1 49L12 42V56Z" fill="#86a5ab" stroke="#2b4954" />
          </svg>
        </ZoomBox>
        <ScrollButton aria-label="Scroll up"><Arrow dir="up" /></ScrollButton>
        <Trough $c="#7f9ab7" />
        <Trough $h={76} />
        <ScrollButton aria-label="Scroll down"><Arrow dir="down" /></ScrollButton>
        <Divider />
        <ZoomBox $h={13}><Caret color="#26384a" /></ZoomBox>
        <ZoomBox $h={79}>
          <svg width="14" height="76" viewBox="0 0 14 76" aria-hidden="true">
            <path d="M6.500 11V66M4 5.500H9M4 71.500H9M6.500 69V74" stroke="#26384a" />
            <path d="M1 28L12 21V35Z" fill="#86a5ab" stroke="#2b4954" />
          </svg>
        </ZoomBox>
      </VBar>
    </Body>
    <BottomRow>
      <ScrollButton aria-label="Scroll left"><Arrow dir="left" /></ScrollButton>
      <HTrough><HThumb /></HTrough>
      <ScrollButton aria-label="Scroll right"><Arrow dir="right" /></ScrollButton>
      <Divider />
      <ScrollButton aria-label="Zoom presets"><Caret color="#26384a" /></ScrollButton>
      <HZoom>
        <svg width="74" height="14" viewBox="0 0 74 14" aria-hidden="true">
          <path d="M1 6.500H6M10 6.500H63M66 6.500H72M69 4V9" stroke="#26384a" />
          <path d="M41 1L47 12H35Z" fill="#86a5ab" stroke="#2b4954" />
        </svg>
      </HZoom>
      <Gap $w={16} />
    </BottomRow>
  </Arrange>
);

/* ---------- transport panel ---------- */
const Panel = styled.section`
  position: absolute;
  left: 250px;
  top: 825px;
  width: 901px;
  height: 69px;
  padding: 3px 4px;
  display: flex;
  gap: 6px;
  background: linear-gradient(#bccada, #97aac0);
  border: 1px solid #22384a;
  color: #dfecef;
`;
const Fold = styled.button`
  width: 8px;
  flex: none;
  background: none;
  display: flex;
  align-items: flex-start;
  border-right: 1px solid #7e90a3;
`;
const FaderEnd = styled.div`
  display: flex;
  gap: 2px;
`;
const PanelLine = styled.span`
  width: 1px;
  background: #7e90a3;
`;
const Screen = styled.div<{ $w: number }>`
  width: ${(p) => p.$w}px;
  flex: none;
  display: flex;
  flex-direction: column;
  background: #000;
  border: 2px solid #0c1822;
  border-radius: 2px;
`;
const MeterScreen = styled(Screen)`
  padding: 1px;
  display: grid;
  grid-template-columns: 1fr 1fr;
  grid-template-rows: 11px 1fr;
  gap: 2px;
`;
const Cell = styled.i<{ $c?: string }>`
  background: ${(p) => p.$c || "#213b44"};
`;
const ModeRow = styled.label`
  height: 20px;
  display: flex;
  align-items: center;
  gap: 1px;
`;
const SmallRow = styled.div<{ $line?: boolean; $flush?: boolean }>`
  height: 15px;
  display: flex;
  align-items: center;
  gap: 4px;
  padding-right: ${(p) => (p.$flush ? 0 : 3)}px;
  font: 10px/14px ${sans};
  border-top: ${(p) => (p.$line ? "1px solid #a9b6bb" : "0")};
`;
const Tag = styled.button<{ $w: number; $hot?: boolean }>`
  width: ${(p) => p.$w}px;
  height: 13px;
  flex: none;
  background: ${(p) => (p.$hot ? "#f7a552" : "#74888f")};
  color: ${(p) => (p.$hot ? "#241200" : "#dfecef")};
  display: grid;
  place-items: center;
  font: 9px/13px ${sans};
  white-space: nowrap;
`;
const Figures = styled.span<{ $dim?: boolean }>`
  flex: 1;
  display: grid;
  grid-template-columns: ${(p) => (p.$dim ? "1fr 17px" : "1fr 17px 17px 21px")};
  text-align: right;
  font: ${(p) => (p.$dim ? "normal" : "bold")} 12px/14px ${sans};
  color: ${(p) => (p.$dim ? "#42525a" : "#e9f4f5")};
`;
const Push = styled.span`
  margin-left: auto;
`;
const Center = styled.div`
  width: 270px;
  flex: none;
  display: flex;
  flex-direction: column;
  gap: 3px;
`;
const Display = styled.div`
  height: 30px;
  background: #000;
  border: 2px solid #0c1822;
  border-radius: 2px;
`;
const DisplayRow = styled.div`
  height: 20px;
  display: flex;
  align-items: center;
  gap: 4px;
  padding-right: 2px;
`;
const Position = styled.strong`
  flex: 1;
  text-align: right;
  font: bold 16px/20px ${sans};
  white-space: pre;
`;
const Progress = styled.div`
  height: 4px;
  margin: 1px;
  background: #22363d;
  border-left: 3px solid #8fb43c;
`;
const Markers = styled.div`
  flex: 1;
  display: grid;
  grid-template-columns: repeat(5, 1fr);
  text-align: center;
  font: 11px/14px ${sans};
`;
const Bold = styled.strong`
  margin-left: auto;
  font-size: 12px;
`;

const Wheel = () => (
  <svg width="62" height="62" viewBox="0 0 62 62" aria-hidden="true">
    <circle cx="31" cy="31" r="30" fill="#83979f" stroke="#566b76" strokeWidth="2" />
    <circle cx="31" cy="31" r="28" fill="none" stroke="#a7b7bd" />
    <circle cx="31" cy="31" r="20" fill="#94a6ad" stroke="#4c606a" />
    <circle cx="31" cy="31" r="15" fill="#879ba4" stroke="#60757e" />
    <circle cx="31" cy="31" r="10" fill="#96a8af" stroke="#4c606a" />
    <path d="M31 21V41M23 31H29M33 31H39M36 28V34" stroke="#2d3d45" />
    <circle cx="31" cy="6" r="3" /><circle cx="31" cy="16" r="3" />
    <circle cx="5" cy="55" r="2" fill="#fff" /><circle cx="57" cy="55" r="2" fill="#fff" />
  </svg>
);
const FoldIcon = () => <Glyph w={7} h={12} color="#1c2f3e" d="M0 3.500H7M0 10.500H7M1.500 9V6.500L3.500 5L5.500 6.500V9" />;
const RecMode = ({ loop = false }: { loop?: boolean }) => (
  <svg width="18" height="16" viewBox="0 0 18 16" fill="none" aria-hidden="true">
    <circle cx="6" cy="5" r="3" stroke="#a5161b" strokeWidth="2" />
    {loop ? <ellipse cx="9" cy="11" rx="7" ry="4" stroke="#d99a98" /> : <path d="M2 11.500H17M9 9L12 11.500L9 14" stroke="#d99a98" />}
  </svg>
);
const Locator = ({ tag, values, fade, icon, line }: { tag: string; values: string[]; fade: string; icon: string; line?: boolean }) => (
  <>
    <SmallRow $line={line} $flush>
      <Tag $w={19}>{tag}</Tag>
      <Figures>{values.map((v, i) => <span key={i}>{v}</span>)}</Figures>
    </SmallRow>
    <SmallRow $flush>
      <Tag $w={19} aria-label={"Fade " + tag}><Glyph w={16} h={9} color="#dfecef" d={fade} /></Tag>
      <Figures $dim><span>0.</span><span>0</span></Figures>
      <Tag $w={18} aria-label={"Punch " + tag}><Glyph w={14} h={9} color="#dfecef" d={icon} /></Tag>
    </SmallRow>
  </>
);

const TransportPanel = () => (
  <Panel>
    <Fold aria-label="Collapse left"><FoldIcon /></Fold>
    <MeterScreen $w={14}>
      <Cell /><Cell /><Cell $c="linear-gradient(0deg, #4fc0dc 3px, #213b44 3px)" /><Cell />
    </MeterScreen>
    <Screen $w={83}>
      <ModeRow><RecMode /><Select aria-label="Record mode"><option>Normal</option></Select><Caret /></ModeRow>
      <ModeRow><RecMode loop /><Select aria-label="Cycle mode"><option>Mix (MIDI)</option></Select><Caret /></ModeRow>
      <Spread />
      <SmallRow $line><Tag $w={36}>AUTO Q</Tag>OFF</SmallRow>
    </Screen>
    <Screen $w={115}>
      <Locator tag="L" values={["1.", "1.", "1.", "0"]} fade="M0 1.500H4L11 7.500H16" icon="M1.500 0V9M4.500 0V9M7.500 .5L13 4.500L7.500 8.500Z" />
      <Locator line tag="R" values={["93.", "3.", "3.", "80"]} fade="M0 7.500H4L11 1.500H16" icon="M.5 1.500H7.500V7.500H.5ZM10.500 0V9M13.500 0V9" />
    </Screen>
    <Wheel />
    <Center>
      <Display>
        <DisplayRow>
          <Glyph w={8} h={14} color="#8fa0a6" d="M0 4.500H8M4.500 1V8M0 12.500H8" />
          <Position>1.  4.  2.100</Position>
          <Solid w={9} h={13} color="#74888f" d="M7 0H8V10Q7 13 3 13Q0 12 2 9Q4 8 7 9Z" />
          <Gap $w={5} />
          <Glyph w={5} h={18} color="#8fa0a6" d="M2.500 0V18M.5 3L2.500 0M4.500 15L2.500 18" />
          <Gap $w={17} />
          <Bold>0:00:01.297</Bold>
          <SolidClock />
        </DisplayRow>
        <Progress />
      </Display>
      <Transport $grow>
        <TButton $small aria-label="Go to start"><Solid w={11} h={10} color="#fff" d={P.prev} /></TButton>
        <TButton aria-label="Rewind"><Solid w={17} h={10} color="#fff" d={P.rew} /></TButton>
        <TButton aria-label="Forward"><Solid w={17} h={10} color="#fff" d={P.ffw} /></TButton>
        <TButton $small aria-label="Go to end"><Solid w={11} h={10} color="#fff" d={P.next} /></TButton>
        <TButton aria-label="Cycle"><Cycle /></TButton>
        <TButton $tone="stop" aria-label="Stop"><Solid w={8} h={8} color="#fff" d="M0 0H8V8H0Z" /></TButton>
        <TButton $tone="play" aria-label="Play"><Solid w={8} h={10} color="#fff" d={P.play} /></TButton>
        <TButton $tone="rec" aria-label="Record"><Solid w={8} h={8} color="#fff" d="M0 4A4 4 0 1 1 8 4A4 4 0 1 1 0 4" /></TButton>
      </Transport>
    </Center>
    <Screen $w={113}>
      <SmallRow $flush>
        <Tag $w={35} $hot>CLICK</Tag>ON
        <Push><Tag $w={19} aria-label="Precount"><Glyph w={16} h={10} color="#dfecef" d="M1.500 0V10M4.500 0V10M11.500 0V10M7 5H16M8 2L15 8M15 2L8 8" /></Tag></Push>
      </SmallRow>
      <SmallRow $line><Tag $w={35}>TEMPO</Tag>FIXED<Bold>4/4</Bold></SmallRow>
      <SmallRow><Bold>160.000</Bold></SmallRow>
      <SmallRow $line><Tag $w={35}>SYNC</Tag>INT.</SmallRow>
    </Screen>
    <Screen $w={91}>
      <SmallRow><Tag $w={35}>SHOW</Tag><Push>MARKER</Push></SmallRow>
      <Markers>{Array.from({ length: 15 }, (_, i) => <span key={i}>{i + 1}</span>)}</Markers>
    </Screen>
    <MeterScreen $w={14}><Cell /><Cell /><Cell /><Cell /></MeterScreen>
    <MeterScreen $w={39}><Cell /><Cell $c="#ff0606" /><Cell /><Cell /></MeterScreen>
    <FaderEnd>
      <svg width="10" height="60" viewBox="0 0 10 60" aria-hidden="true">
        <path d="M5.500 0V60M0 3.500H10M0 56.500H10" stroke="#26384a" /><path d="M0 15L8 10V20Z" fill="#8b9da4" stroke="#42565f" />
      </svg>
      <PanelLine />
      <FoldIcon />
    </FaderEnd>
  </Panel>
);

/* ---------- device setup ---------- */
const Dialog = styled.section`
  position: absolute;
  left: 134px;
  top: 201px;
  width: 672px;
  padding: 1px;
  background: #aabdcb;
  border: 2px solid;
  border-color: #efede3 #6d6a65 #6d6a65 #efede3;
  box-shadow: inset 0 0 0 1px #d4d0c8;
`;
const DialogTitle = styled.header`
  height: 18px;
  padding: 0 2px 0 3px;
  display: flex;
  align-items: center;
  gap: 2px;
  color: #fff;
  background: linear-gradient(90deg, #0a246a, #a6caf0);
  font: bold 11px/18px ${tahoma};
`;
const Group = styled.div`
  margin: 7px 6px;
  padding: 3px 7px 4px 5px;
  display: grid;
  grid-template-columns: 278px 1fr;
  gap: 4px 8px;
  border: 1px solid;
  border-color: #bccbd6 #72889b #72889b #bccbd6;
`;
const MiniBar = styled.div`
  width: 64px;
  height: 25px;
  display: flex;
  background: #b8c7d3;
  border: 1px solid #1a2732;
  border-radius: 2px;
  box-shadow: 1px 1px #6f8190;
`;
const MiniButton = styled.button`
  flex: 1;
  display: grid;
  place-items: center;
  background: transparent;
  &:not(:last-child) { border-right: 1px solid #8596a4; }
`;
const Heading = styled.h2`
  margin: 0;
  color: #e4e9ee;
  font: bold 16px/24px ${sans};
`;
const Pane = styled.div`
  height: 436px;
  display: flex;
  flex-direction: column;
  border-left: 2px solid #14202b;
  border-top: 2px solid #14202b;
`;
const PaneHeader = styled.div`
  height: 15px;
  padding-left: 5px;
  border-bottom: 1px solid #7c8e9c;
  line-height: 15px;
`;
const PaneBody = styled.div`
  flex: 1;
  display: flex;
`;
const Tree = styled.div`
  flex: 1;
  padding-left: 16px;
  background: #e6e7ef;
`;
const Node = styled.li`
  position: relative;
  padding-left: 18px;
  &::before {
    content: "";
    position: absolute;
    left: 0;
    top: 0;
    bottom: 0;
    border-left: 1px dotted #70747c;
  }
  &:last-child::before { bottom: auto; height: 8px; }
  &::after {
    content: "";
    position: absolute;
    left: 0;
    top: 8px;
    width: 15px;
    border-top: 1px dotted #70747c;
  }
`;
const Branch = styled.ul<{ $root?: boolean }>`
  margin-left: ${(p) => (p.$root ? 0 : 7)}px;
  padding-top: ${(p) => (p.$root ? 6 : 0)}px;
  ${(p) => p.$root && css`& > ${Node}:first-child::before { top: -6px; }`}
`;
const Leaf = styled.div<{ $on?: boolean }>`
  height: 16px;
  width: max-content;
  display: flex;
  align-items: center;
  gap: 4px;
  ${(p) => p.$on && "background: #0a246a; color: #fff; margin-left: -3px; padding: 0 2px 0 3px;"}
`;
const HBar = styled.div`
  height: 17px;
  width: 261px;
  display: flex;
  background: #a9bccb;
  border: solid #2a3e50;
  border-width: 1px 0;
`;
const TablePane = styled(Pane)`
  height: 378px;
  width: 349px;
  flex-direction: row;
  border-bottom: 1px solid #5c6c7a;
  background: #e6e7ef;
`;
const Table = styled.table`
  flex: 1;
  align-self: flex-start;
  table-layout: fixed;
  border-collapse: separate;
  border-spacing: 0;
`;
const Th = styled.th<{ $w: number }>`
  width: ${(p) => p.$w}px;
  height: 15px;
  padding: 0 4px;
  background: #aabdcb;
  border-right: 1px solid #5c6c7a;
  border-bottom: 1px solid #7c8e9c;
  font-weight: normal;
  text-align: left;
  line-height: 14px;
`;
const Td = styled.td<{ $mid?: boolean; $focus?: boolean }>`
  height: 17px;
  padding: 0 3px;
  border-right: 1px solid #5c6c7a;
  border-bottom: 1px solid #5c6c7a;
  text-align: ${(p) => (p.$mid ? "center" : "left")};
  line-height: 16px;
  ${(p) => p.$focus && "border-color: #35b795; box-shadow: inset 1px 1px #35b795;"}
`;
const ScrollCorner = styled.div`
  height: 15px;
  background: #aabdcb;
`;
const CheckRow = styled.label`
  margin: 11px 0 8px 6px;
  height: 12px;
  display: flex;
  align-items: center;
  gap: 6px;
`;
const Check = styled.input`
  appearance: none;
  width: 12px;
  height: 12px;
  background: #fff;
  border: 1px solid #6c6c6c;
  display: grid;
  &:checked { background: #000; }
  &:checked::before {
    content: "";
    width: 7px;
    height: 4px;
    margin: 2px 1px;
    border: solid #fff;
    border-width: 0 0 2px 2px;
    transform: rotate(-45deg);
  }
`;
const Buttons = styled.div<{ $end?: boolean }>`
  display: flex;
  gap: 6px;
  justify-content: ${(p) => (p.$end ? "flex-end" : "flex-start")};
  padding: ${(p) => (p.$end ? "0 6px 6px" : "0")};
`;
const Button = styled.button<{ $wide?: boolean; $main?: boolean; $push?: boolean }>`
  width: ${(p) => (p.$wide ? 100 : 80)}px;
  height: 23px;
  margin-left: ${(p) => (p.$push ? "auto" : "0")};
  background: #e6e7ef;
  border: 1px solid ${(p) => (p.$main ? "#0b1520" : "#fff")};
  ${(p) => !p.$main && "border-color: #fff #5f6a75 #5f6a75 #fff; box-shadow: inset -1px -1px #9da6b0;"}
  &:disabled { color: #76879d; }
`;

type TreeItem = { label: string; icon?: "folder" | "cam" | "wave"; on?: boolean; kids?: TreeItem[] };
const t = (...labels: string[]): TreeItem[] => labels.map((label) => ({ label }));
const devices: TreeItem[] = [
  { label: "MIDI", icon: "folder", kids: [...t("All MIDI Inputs", "Default MIDI Ports", "DirectMusic"), { label: "Windows MIDI", on: true }] },
  { label: "Studio Manager" },
  { label: "Transport", icon: "folder", kids: t("9-Pin Device 1", "9-Pin Device 2", "Time Base", "Time Base 9-Pin", "Time Display") },
  { label: "Video", icon: "folder", kids: [{ label: "Video Player", icon: "cam" }] },
  { label: "VST Audiobay", icon: "wave", kids: [{ label: "ASIO SCOPE", kids: t("VST Inputs", "VST Outputs", "VST System Link") }] },
];
const icons = {
  folder: <Folder gold />,
  cam: <Solid w={16} h={8} color="#34383c" d="M0 0H3L4 2L6 1H8L9 2L10 1H12V3L14 1V7L12 5V7H4V4L0 2Z" />,
  wave: (
    <svg width="16" height="14" viewBox="0 0 16 14" aria-hidden="true">
      <path d="M0 0H16V14H0Z" fill="#f6f6f8" /><path d="M0 .5H16M0 13.500H16" stroke="#9aa0a6" />
      <path d="M0 7H16M2 5V9M4 6V9M6 3V11M8 5V10M10 4V10M12 3V11M14 6V9" stroke="#222" strokeWidth="1.500" />
    </svg>
  ),
};
const TreeView = ({ items, root }: { items: TreeItem[]; root?: boolean }) => (
  <Branch $root={root}>
    {items.map((n) => (
      <Node key={n.label}>
        <Leaf $on={n.on}>{n.icon ? icons[n.icon] : null}{n.label}</Leaf>
        {n.kids ? <TreeView items={n.kids} /> : null}
      </Node>
    ))}
  </Branch>
);
const ports = [
  ["Out", "Sint. SW de tabla de ondas GS", "No", "Yes", ""],
  ["Out", "CreamWare MIDI In/Out 1", "No", "Yes", ""],
  ["Out", "CreamWare MIDI In/Out 2", "No", "Yes", ""],
  ["In", "CreamWare MIDI In/Out 1", "Yes", "Yes", ""],
  ["In", "CreamWare MIDI In/Out 2", "Yes", "Yes", ""],
];
const columns: [string, number][] = [["Dir", 30], ["Device", 170], ["Active", 50], ["Show", 50], ["", 30]];

const DeviceSetup = () => (
  <Dialog role="dialog" aria-label="Device Setup">
    <DialogTitle>
      <Logo />Device Setup
      <WinButtons><WinButton aria-label="Close"><Glyph w={8} h={8} sw={2} d="M0 0L8 8M8 0L0 8" /></WinButton></WinButtons>
    </DialogTitle>
    <Group>
      <MiniBar>
        <MiniButton aria-label="Add device">
          <svg width="17" height="17" viewBox="0 0 17 17" aria-hidden="true"><circle cx="8.500" cy="8.500" r="8" /><path d="M3 8.500H14M8.500 3V14" stroke="#e4eaf0" strokeWidth="2" /></svg>
        </MiniButton>
        <MiniButton aria-label="Remove device">
          <svg width="17" height="17" viewBox="0 0 17 17" aria-hidden="true"><circle cx="8.500" cy="8.500" r="8" fill="#8496a3" /><path d="M3 8.500H14" stroke="#b9c7d3" strokeWidth="2" /></svg>
        </MiniButton>
        <MiniButton aria-label="Reset device">0«</MiniButton>
      </MiniBar>
      <Heading>Windows MIDI</Heading>
      <Pane>
        <PaneHeader>Devices</PaneHeader>
        <PaneBody>
          <Tree><TreeView items={devices} root /></Tree>
          <VBar>
            <ScrollButton aria-label="Scroll up"><Arrow dir="up" /></ScrollButton>
            <Trough />
            <ScrollButton aria-label="Scroll down"><Arrow dir="down" /></ScrollButton>
          </VBar>
        </PaneBody>
        <HBar>
          <ScrollButton aria-label="Scroll left"><Arrow dir="left" /></ScrollButton>
          <Spread />
          <ScrollButton aria-label="Scroll right"><Arrow dir="right" /></ScrollButton>
        </HBar>
      </Pane>
      <div>
        <TablePane>
          <Table>
            <thead><tr>{columns.map(([c, w]) => <Th key={c} $w={w}>{c}</Th>)}</tr></thead>
            <tbody>
              {ports.map((r, y) => (
                <tr key={y}>{r.map((c, x) => <Td key={x} $mid={x === 0} $focus={x === 0 && y === 0}>{c}</Td>)}</tr>
              ))}
            </tbody>
          </Table>
          <VBar>
            <ScrollCorner />
            <ScrollButton aria-label="Scroll up"><Arrow dir="up" /></ScrollButton>
            <Trough />
            <ScrollButton aria-label="Scroll down"><Arrow dir="down" /></ScrollButton>
          </VBar>
        </TablePane>
        <CheckRow><Check type="checkbox" defaultChecked />Use System Timestamp</CheckRow>
        <Buttons>
          <Button>Help</Button>
          <Button $wide $push>Reset</Button>
          <Button $wide disabled>Apply</Button>
        </Buttons>
      </div>
    </Group>
    <Buttons $end>
      <Button $main>OK</Button>
      <Button>Cancel</Button>
    </Buttons>
  </Dialog>
);

const menu = ["File", "Edit", "Project", "Audio", "MIDI", "Scores", "Pool", "Transport", "Network", "Devices", "Window (1)", "Help"];

export default function App() {
  return (
    <Page>
      <GlobalStyle />
      <Frame>
        <TitleBar>
          <LogoSlot><Logo /></LogoSlot>
          Nuendo - [Nuendo Project - Las mellizas de oro.npr]
          <WindowControls />
        </TitleBar>
        <MenuBar>
          <LogoSlot><Logo /></LogoSlot>
          <Menus>{menu.map((m) => <MenuItem key={m}>{m}</MenuItem>)}</Menus>
          <WindowControls />
        </MenuBar>
        <MainToolbar />
        <InfoLine>No Object Selected</InfoLine>
        <Main>
          <InspectorPanel />
          <TrackList />
          <ArrangeArea />
        </Main>
      </Frame>
      <DeviceSetup />
      <TransportPanel />
    </Page>
  );
}
